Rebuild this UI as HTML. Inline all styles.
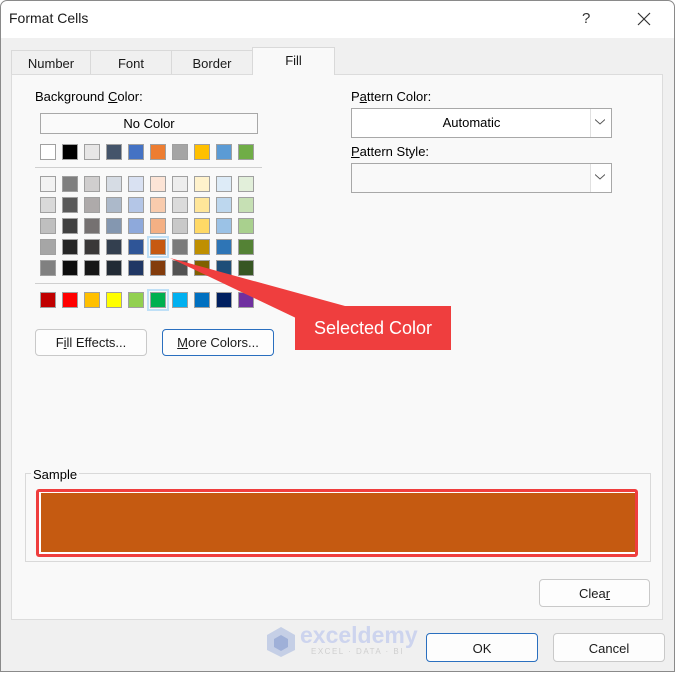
<!DOCTYPE html>
<html><head><style>
*{margin:0;padding:0;box-sizing:border-box}
body{width:676px;height:673px;background:#fff;font-family:"Liberation Sans",sans-serif;font-size:13px;color:#000;position:relative;overflow:hidden}
.a{position:absolute}
.win{left:0;top:0;width:675px;height:672px;background:#f0f0f0;overflow:hidden}
.frame{left:0;top:0;width:675px;height:672px;border:1px solid #8a8a8a;border-radius:7px 7px 0 0;z-index:10;pointer-events:none}
.title{left:0;top:0;width:100%;height:38px;background:#fff}
.tab{top:50px;height:25px;background:#f0f0f0;border:1px solid #d9d9d9;border-bottom:none;text-align:center;line-height:25px;color:#1a1a1a}
.panel{left:11px;top:74px;width:652px;height:546px;background:#f9f9f9;border:1px solid #dcdcdc}
.sw{width:16px;height:16px;border:1px solid #a0a0a0}
.btn{background:#fdfdfd;border:1px solid #c9c9c9;border-radius:4px;text-align:center;color:#1a1a1a}
.sel{outline:2px solid #bfe0f7;outline-offset:1px}
</style></head><body>
<div class="a win">
<div class="a title"></div>
<div class="a" style="left:9px;top:10px;font-size:14px;color:#1a1a1a">Format Cells</div>
<div class="a" style="left:582px;top:10px;font-size:15px;color:#333">?</div>
<svg class="a" style="left:637px;top:12px" width="14" height="14"><path d="M1 1L13 13M13 1L1 13" stroke="#333" stroke-width="1.2"/></svg>
<div class="a tab" style="left:11px;width:80px">Number</div>
<div class="a tab" style="left:90px;width:82px">Font</div>
<div class="a tab" style="left:171px;width:82px">Border</div>
<div class="a panel"></div>
<div class="a tab" style="left:252px;top:47px;height:28px;width:83px;background:#f9f9f9;z-index:2">Fill</div>
<div class="a" style="left:35px;top:89px">Background <u>C</u>olor:</div>
<div class="a" style="left:40px;top:113px;width:218px;height:21px;border:1px solid #a8a8a8;background:#fafafa;text-align:center;line-height:19px">No Color</div>
<div class="a" style="left:35px;top:167px;width:227px;height:1px;background:#cfcfcf"></div>
<div class="a" style="left:35px;top:283px;width:227px;height:1px;background:#cfcfcf"></div>
<div id="g"></div>
<div class="a btn" style="left:35px;top:329px;width:112px;height:27px;line-height:26px">F<u>i</u>ll Effects...</div>
<div class="a btn" style="left:162px;top:329px;width:112px;height:27px;line-height:26px;border-color:#2a6fbf"><u>M</u>ore Colors...</div>
<div class="a" style="left:351px;top:89px">P<u>a</u>ttern Color:</div>
<div class="a" style="left:351px;top:108px;width:261px;height:30px;border:1px solid #a8a8a8;background:#fff;text-align:center;line-height:28px;padding-right:20px">Automatic</div>
<div class="a" style="left:590px;top:109px;width:21px;height:28px;border-left:1px solid #e0e0e0;background:#fff"></div>
<svg class="a" style="left:595px;top:119px" width="10" height="6"><path d="M0 0.5L5 5L10 0.5" fill="none" stroke="#555"/></svg>
<div class="a" style="left:351px;top:144px"><u>P</u>attern Style:</div>
<div class="a" style="left:351px;top:163px;width:261px;height:30px;border:1px solid #a8a8a8;background:#f9f9f9"></div>
<div class="a" style="left:590px;top:164px;width:21px;height:28px;border-left:1px solid #e0e0e0;background:#fff"></div>
<svg class="a" style="left:595px;top:174px" width="10" height="6"><path d="M0 0.5L5 5L10 0.5" fill="none" stroke="#555"/></svg>
<svg class="a" style="left:0;top:0;z-index:3" width="676" height="400"><polygon points="170,258 345,306 296,318" fill="#ef3e3e"/></svg>
<div class="a" style="left:295px;top:306px;width:156px;height:44px;background:#ef3e3e;color:#fff;font-size:18px;line-height:44px;text-align:center;z-index:3">Selected Color</div>
<div class="a" style="left:25px;top:473px;width:626px;height:89px;border:1px solid #d9d9d9"></div>
<div class="a" style="left:31px;top:467px;background:#f9f9f9;padding:0 2px">Sample</div>
<div class="a" style="left:36px;top:489px;width:602px;height:68px;border:3px solid #ef3e3e;border-radius:3px;background:#fff"></div>
<div class="a" style="left:41px;top:493px;width:594px;height:59px;background:#c55a11"></div>
<div class="a btn" style="left:539px;top:579px;width:111px;height:28px;line-height:28px">Clea<u>r</u></div>
<svg class="a" style="left:266px;top:626px" width="30" height="32"><polygon points="15,1 29,9 29,24 15,31 1,24 1,9" fill="#c5cfe6"/><polygon points="15,9 22,13 22,21 15,25 8,21 8,13" fill="#9fb0d8"/></svg>
<div class="a" style="left:300px;top:622px;font-size:23px;font-weight:bold;color:#cdd4ee">exceldemy</div>
<div class="a" style="left:311px;top:647px;font-size:8px;letter-spacing:1.5px;color:#cfcfcf">EXCEL · DATA · BI</div>
<div class="a btn" style="left:426px;top:633px;width:112px;height:29px;line-height:29px;border-color:#2a6fbf">OK</div>
<div class="a btn" style="left:553px;top:633px;width:112px;height:29px;line-height:29px">Cancel</div>
</div>
<div class="a frame"></div>
<script>
var rows=[
[144,["#ffffff","#000000","#e7e6e6","#44546a","#4472c4","#ed7d31","#a5a5a5","#ffc000","#5b9bd5","#70ad47"]],
[176,["#f2f2f2","#7f7f7f","#d0cece","#d6dce4","#d9e1f2","#fce4d6","#ededed","#fff2cc","#ddebf7","#e2efda"]],
[197,["#d9d9d9","#595959","#aeaaaa","#acb9ca","#b4c6e7","#f8cbad","#dbdbdb","#ffe699","#bdd7ee","#c6e0b4"]],
[218,["#bfbfbf","#404040","#757171","#8497b0","#8ea9db","#f4b084","#c9c9c9","#ffd966","#9bc2e6","#a9d08e"]],
[239,["#a6a6a6","#262626","#3a3838","#333f4f","#2f5597","#c65911","#7b7b7b","#bf8f00","#2e75b6","#548235"]],
[260,["#808080","#0d0d0d","#161616","#222b35","#203764","#833c0c","#525252","#806000","#1f4e78","#375623"]],
[292,["#c00000","#ff0000","#ffc000","#ffff00","#92d050","#00b050","#00b0f0","#0070c0","#002060","#7030a0"]]];
var h="";rows.forEach(function(r){r[1].forEach(function(c,i){var s=(r[0]==239&&i==5)||(r[0]==292&&i==5);h+='<div class="a sw'+(s?' sel':'')+'" style="left:'+(40+i*22)+'px;top:'+r[0]+'px;background:'+c+'"></div>';});});
document.getElementById("g").outerHTML=h;
</script>
</body></html>
